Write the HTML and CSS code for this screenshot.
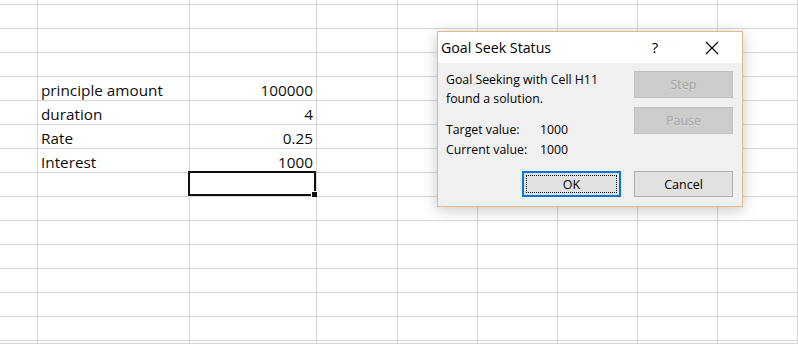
FILE: index.html
```html
<!DOCTYPE html>
<html lang="en">
<head>
  <meta charset="UTF-8" />
  <meta name="viewport" content="width=device-width, initial-scale=1.0" />
  <title>Goal Seek Status</title>
  <link rel="stylesheet" href="styles.css">
</head>
<body>
  <div class="sheet" id="sheet"></div>

  <div class="dialog">
    <div class="dialog-title">
      <div class="title-text">Goal Seek Status</div>
      <div class="title-help">?</div>
      <div class="title-close">
        <svg width="14" height="14" viewBox="0 0 14 14">
          <path d="M1 1 L13 13 M13 1 L1 13" stroke="#000" stroke-width="1.1" fill="none" />
        </svg>
      </div>
    </div>
    <div class="dialog-body">
      <div class="dialog-main">
        <div class="message">
          <div class="message-lines">Goal Seeking with Cell H11<br>found a solution.</div>
          <div class="values">
            <div>Target value:</div><div>1000</div>
            <div>Current value:</div><div>1000</div>
          </div>
        </div>
        <div class="side-buttons">
          <div class="btn btn-disabled">Step</div>
          <div class="btn btn-disabled">Pause</div>
        </div>
      </div>
      <div class="dialog-footer">
        <div class="btn btn-default">OK</div>
        <div class="btn">Cancel</div>
      </div>
    </div>
  </div>

  <script>
    const colCount = 9;
    const rowCount = 16;
    const data = {
      4: ['principle amount', '100000'],
      5: ['duration', '4'],
      6: ['Rate', '0.25'],
      7: ['Interest', '1000']
    };
    const selected = { row: 8, col: 2 };

    const sheet = document.getElementById('sheet');

    for (let r = 0; r < rowCount; r++) {
      for (let c = 0; c < colCount; c++) {
        const cell = document.createElement('div');
        cell.className = 'cell';
        if (c === 1) cell.classList.add('cell-text');
        if (c === 2) cell.classList.add('cell-num');

        if (data[r] && (c === 1 || c === 2)) {
          cell.textContent = data[r][c - 1];
        }

        if (r === selected.row && c === selected.col) {
          cell.innerHTML = '<div class="selection"><div class="fill-handle"></div></div>';
        }
        sheet.appendChild(cell);
      }
    }
  </script>
</body>
</html>
```

FILE: styles.css
```css
body {
  margin: 0;
  padding: 0;
  width: 798px;
  height: 344px;
  overflow: hidden;
  background-color: #fff;
  position: relative;
}
.sheet {
  display: grid;
  grid-template-columns: 38px 152px 127px 81px 80px 80px 80px 80px 80px;
  grid-template-rows: 5px repeat(14, 24px) 3px;
  font-family: "Open Sans", "Liberation Sans", sans-serif;
  font-size: 15.3px;
  color: #0d0d0d;
}
.cell {
  box-sizing: border-box;
  border-right: 1px solid #d6d6d6;
  border-bottom: 1px solid #d6d6d6;
  display: flex;
  align-items: flex-end;
  line-height: 20px;
  white-space: nowrap;
  position: relative;
}
.cell-text {
  padding-left: 3px;
}
.cell-num {
  justify-content: flex-end;
  padding-right: 3px;
}
.selection {
  position: absolute;
  left: -2px;
  top: -2px;
  right: 0;
  bottom: 0;
  border: 2px solid #111;
}
.fill-handle {
  position: absolute;
  right: -4px;
  bottom: -4px;
  width: 5px;
  height: 5px;
  background-color: #111;
  border: 1px solid #fff;
}

/* dialog */
.dialog {
  position: absolute;
  left: 437px;
  top: 31px;
  width: 306px;
  box-sizing: border-box;
  border: 1px solid #e2b98e;
  background-color: #f0f0f0;
  box-shadow: 0 3px 14px rgba(0, 0, 0, 0.22);
  font-family: "Open Sans", "Liberation Sans", sans-serif;
  color: #000;
}
.dialog-title {
  display: flex;
  align-items: center;
  height: 31px;
  background-color: #fff;
  padding-left: 3px;
  padding-right: 15px;
}
.title-text {
  flex: 1;
  font-size: 14.2px;
  line-height: 31px;
}
.title-help {
  width: 30px;
  text-align: center;
  font-size: 15px;
  line-height: 31px;
}
.title-close {
  width: 30px;
  margin-left: 27px;
  display: flex;
  justify-content: center;
}
.dialog-body {
  padding: 8px 9px 9px 8px;
  font-size: 12.3px;
}
.dialog-main {
  display: flex;
  height: 100px;
}
.message {
  flex: 1;
}
.message-lines {
  line-height: 19px;
  margin-top: -1px;
}
.values {
  display: grid;
  grid-template-columns: 94px auto;
  line-height: 20px;
  margin-top: 12px;
}
.side-buttons {
  display: flex;
  flex-direction: column;
  gap: 9px;
}
.dialog-footer {
  display: flex;
  justify-content: flex-end;
  gap: 13px;
}
.btn {
  box-sizing: border-box;
  width: 99px;
  height: 26px;
  border: 1px solid #adadad;
  background-color: #e1e1e1;
  display: flex;
  align-items: center;
  justify-content: center;
  font-size: 12.5px;
}
.btn-disabled {
  height: 27px;
  background-color: #cccccc;
  border-color: #bfbfbf;
  color: #a3a3a3;
  text-shadow: 0 1px 0 #dcdcdc;
}
.btn-default {
  border: 2px solid #0078d7;
  outline: 1px dotted #000;
  outline-offset: -5px;
}
```
